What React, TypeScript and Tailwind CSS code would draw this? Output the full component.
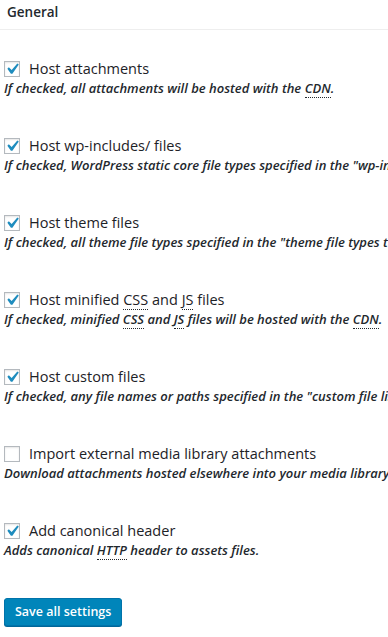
import React from "react";

const Abbr = ({ children }: { children: React.ReactNode }) => (
  <span className="border-b border-dotted border-[#23282d]">{children}</span>
);

type Row = { label: React.ReactNode; desc: React.ReactNode; checked: boolean };

const rows: Row[] = [
  {
    label: "Host attachments",
    desc: (
      <>
        If checked, all attachments will be hosted with the <Abbr>CDN</Abbr>.
      </>
    ),
    checked: true,
  },
  {
    label: "Host wp-includes/ files",
    desc: (
      <>
        If checked, WordPress static core file types specified in the "wp-includes file types to upload" field will be hosted with the <Abbr>CDN</Abbr>.
      </>
    ),
    checked: true,
  },
  {
    label: "Host theme files",
    desc: (
      <>
        If checked, all theme file types specified in the "theme file types to upload" field will be hosted with the <Abbr>CDN</Abbr>.
      </>
    ),
    checked: true,
  },
  {
    label: (
      <>
        Host minified <Abbr>CSS</Abbr> and <Abbr>JS</Abbr> files
      </>
    ),
    desc: (
      <>
        If checked, minified <Abbr>CSS</Abbr> and <Abbr>JS</Abbr> files will be hosted with the <Abbr>CDN</Abbr>.
      </>
    ),
    checked: true,
  },
  {
    label: "Host custom files",
    desc: (
      <>
        If checked, any file names or paths specified in the "custom file list" field will be hosted with the <Abbr>CDN</Abbr>.
      </>
    ),
    checked: true,
  },
  {
    label: "Import external media library attachments",
    desc: (
      <>
        Download attachments hosted elsewhere into your media library and host them with the <Abbr>CDN</Abbr>.
      </>
    ),
    checked: false,
  },
  {
    label: "Add canonical header",
    desc: (
      <>
        Adds canonical <Abbr>HTTP</Abbr> header to assets files.
      </>
    ),
    checked: true,
  },
];

const Check = ({ checked }: { checked: boolean }) => (
  <span className="relative flex h-4 w-4 shrink-0 items-center justify-center border border-[#b4b9be] bg-white shadow-[inset_0_1px_2px_rgba(0,0,0,0.1)]">
    {checked && (
      <svg width="22" height="22" viewBox="0 0 20 20" className="absolute left-[-4px] top-[-4px]">
        <path d="M14.83 4.89l1.34.94-5.81 8.38H9.02L5.78 9.67l1.34-1.25 2.57 2.4z" fill="#1e8cbe" />
      </svg>
    )}
  </span>
);

export default function App() {
  return (
    <div
      className="h-[637px] w-[388px] overflow-hidden bg-white text-[#23282d]"
      style={{ fontFamily: '"Open Sans", sans-serif' }}
    >
      <div className="border-b border-[#eeeeee] px-[7px] pb-[7px] pt-[3px] text-[13.5px] font-semibold leading-[19px]">
        General
      </div>
      <div className="flex flex-col gap-[38px] px-[4px] pt-[30px]">
        {rows.map((r, i) => (
          <div key={i} className="flex flex-col">
            <label className="flex h-[18px] items-center gap-[9px] whitespace-nowrap text-[14.5px] text-[#1d2227]">
              <Check checked={r.checked} />
              <span>{r.label}</span>
            </label>
            <div className="whitespace-nowrap text-[13px] font-semibold italic leading-[21px]">
              {r.desc}
            </div>
          </div>
        ))}
      </div>
      <div className="px-[4px] pt-[37px]">
        <button className="h-[28px] rounded-[3px] border border-[#0073aa] bg-[#0085ba] px-[10px] text-[12.5px] font-semibold leading-[26px] text-white shadow-[0_1px_0_#006799]">
          Save all settings
        </button>
      </div>
    </div>
  );
}
